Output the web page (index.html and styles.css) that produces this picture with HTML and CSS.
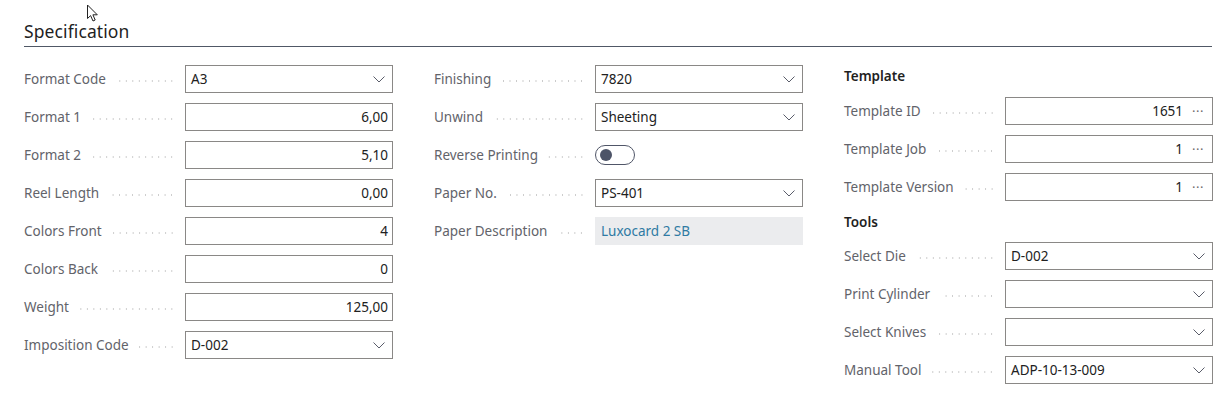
FILE: index.html
```html
<!DOCTYPE html>
<html>
<head>
<meta charset="utf-8">
<link rel="stylesheet" href="styles.css">
</head>
<body>
<div class="page">
  <svg class="cursor" width="14" height="19" viewBox="0 0 14 19"><path d="M1.5 1 L1.5 14.5 L4.6 11.6 L7 17 L9.2 16 L6.9 10.8 L11.3 10.8 Z" fill="#fff" stroke="#222" stroke-width="1" stroke-linejoin="miter"/></svg>
  <div class="section-head"><h2 class="section-title">Specification</h2></div>
  <div class="columns">
    <div class="col">
      <div class="row"><label class="lbl"><span>Format Code</span><i class="dots"></i></label><div class="box sel"><span class="val">A3</span><svg class="chev" viewBox="0 0 12 7"><path d="M0.5 0.5 L6 6 L11.5 0.5" /></svg></div></div>
      <div class="row"><label class="lbl"><span>Format 1</span><i class="dots"></i></label><div class="box num"><span class="val">6,00</span></div></div>
      <div class="row"><label class="lbl"><span>Format 2</span><i class="dots"></i></label><div class="box num"><span class="val">5,10</span></div></div>
      <div class="row"><label class="lbl"><span>Reel Length</span><i class="dots"></i></label><div class="box num"><span class="val">0,00</span></div></div>
      <div class="row"><label class="lbl"><span>Colors Front</span><i class="dots"></i></label><div class="box num"><span class="val">4</span></div></div>
      <div class="row"><label class="lbl"><span>Colors Back</span><i class="dots"></i></label><div class="box num"><span class="val">0</span></div></div>
      <div class="row"><label class="lbl"><span>Weight</span><i class="dots"></i></label><div class="box num"><span class="val">125,00</span></div></div>
      <div class="row"><label class="lbl"><span>Imposition Code</span><i class="dots"></i></label><div class="box sel"><span class="val">D-002</span><svg class="chev" viewBox="0 0 12 7"><path d="M0.5 0.5 L6 6 L11.5 0.5" /></svg></div></div>
    </div>
    <div class="col">
      <div class="row"><label class="lbl"><span>Finishing</span><i class="dots"></i></label><div class="box sel"><span class="val">7820</span><svg class="chev" viewBox="0 0 12 7"><path d="M0.5 0.5 L6 6 L11.5 0.5" /></svg></div></div>
      <div class="row"><label class="lbl"><span>Unwind</span><i class="dots"></i></label><div class="box sel"><span class="val">Sheeting</span><svg class="chev" viewBox="0 0 12 7"><path d="M0.5 0.5 L6 6 L11.5 0.5" /></svg></div></div>
      <div class="row"><label class="lbl"><span>Reverse Printing</span><i class="dots"></i></label><div class="toggle-wrap"><span class="toggle"><span class="knob"></span></span></div></div>
      <div class="row"><label class="lbl"><span>Paper No.</span><i class="dots"></i></label><div class="box sel"><span class="val">PS-401</span><svg class="chev" viewBox="0 0 12 7"><path d="M0.5 0.5 L6 6 L11.5 0.5" /></svg></div></div>
      <div class="row"><label class="lbl"><span>Paper Description</span><i class="dots"></i></label><div class="box ro"><span class="val link">Luxocard 2 SB</span></div></div>
    </div>
    <div class="col">
      <div class="group-head">Template</div>
      <div class="row"><label class="lbl"><span>Template ID</span><i class="dots"></i></label><div class="box num assist"><span class="val">1651</span><span class="ell">···</span></div></div>
      <div class="row"><label class="lbl"><span>Template Job</span><i class="dots"></i></label><div class="box num assist"><span class="val">1</span><span class="ell">···</span></div></div>
      <div class="row"><label class="lbl"><span>Template Version</span><i class="dots"></i></label><div class="box num assist"><span class="val">1</span><span class="ell">···</span></div></div>
      <div class="group-head tools">Tools</div>
      <div class="row"><label class="lbl"><span>Select Die</span><i class="dots"></i></label><div class="box sel"><span class="val">D-002</span><svg class="chev" viewBox="0 0 12 7"><path d="M0.5 0.5 L6 6 L11.5 0.5" /></svg></div></div>
      <div class="row"><label class="lbl"><span>Print Cylinder</span><i class="dots"></i></label><div class="box sel"><span class="val"></span><svg class="chev" viewBox="0 0 12 7"><path d="M0.5 0.5 L6 6 L11.5 0.5" /></svg></div></div>
      <div class="row"><label class="lbl"><span>Select Knives</span><i class="dots"></i></label><div class="box sel"><span class="val"></span><svg class="chev" viewBox="0 0 12 7"><path d="M0.5 0.5 L6 6 L11.5 0.5" /></svg></div></div>
      <div class="row"><label class="lbl"><span>Manual Tool</span><i class="dots"></i></label><div class="box sel"><span class="val">ADP-10-13-009</span><svg class="chev" viewBox="0 0 12 7"><path d="M0.5 0.5 L6 6 L11.5 0.5" /></svg></div></div>
    </div>
  </div>
</div>
</body>
</html>
```

FILE: styles.css
```css
* { box-sizing: border-box; }
html, body { margin: 0; padding: 0; background: #fff; }
body {
  font-family: "Noto Sans", "Open Sans", sans-serif;
  font-size: 13.5px;
  color: #212121;
  width: 1222px;
  height: 403px;
  overflow: hidden;
}
.page {
  position: relative;
  padding: 0 10px 0 24px;
}
.cursor {
  position: absolute;
  left: 86px;
  top: 4px;
}
.section-head {
  padding-top: 17px;
  border-bottom: 1px solid #505866;
  height: 47px;
}
.section-title {
  margin: 0;
  font-size: 17.5px;
  font-weight: 400;
  line-height: 28px;
  color: #1f1f1f;
  letter-spacing: 0.1px;
}
.columns {
  display: grid;
  grid-template-columns: 369px 369px 369px;
  column-gap: 41px;
  padding-top: 13px;
}
.col { display: flex; flex-direction: column; }
.row {
  display: flex;
  align-items: center;
  height: 38px;
}
.lbl {
  width: 161px;
  flex: none;
  display: flex;
  align-items: center;
  color: #62636a;
  white-space: nowrap;
  padding-right: 10px;
}
.dots {
  flex: 1;
  height: 2px;
  margin-left: 10px;
  margin-top: 3px;
  background-image: radial-gradient(circle, #cacaca 0.6px, transparent 0.8px);
  background-size: 6.5px 2px;
  background-position: right center;
  background-repeat: repeat-x;
}
.box {
  width: 208px;
  height: 28px;
  border: 1px solid #8a8886;
  display: flex;
  align-items: center;
  padding: 0 5px;
  color: #212121;
  background: #fff;
}
.box .val { flex: 1; white-space: nowrap; }
.num .val { text-align: right; }
.num { padding-right: 4px; }
.sel { padding-right: 6px; }
.chev {
  width: 12px;
  height: 7px;
  flex: none;
  margin-right: 1px;
  margin-top: 1px;
}
.chev path { fill: none; stroke: #5a5d6a; stroke-width: 1; }
.assist { padding-right: 8px; }
.ell {
  margin-left: 9px;
  color: #6b6b6b;
  font-size: 13px;
  letter-spacing: 0.5px;
}
.ro {
  background: #ebecee;
  border-color: #ebecee;
}
.link { color: #2f7aa3; }
.toggle-wrap { width: 208px; display: flex; align-items: center; }
.toggle {
  width: 40px;
  height: 20px;
  border: 1.5px solid #505668;
  border-radius: 10px;
  display: flex;
  align-items: center;
  padding-left: 3.5px;
}
.knob {
  width: 12px;
  height: 12px;
  border-radius: 50%;
  background: #4d5468;
}
.group-head {
  height: 32px;
  line-height: 33px;
  font-weight: 600;
  color: #1f1f1f;
}
.group-head.tools { height: 31px; line-height: 33px; }
```
